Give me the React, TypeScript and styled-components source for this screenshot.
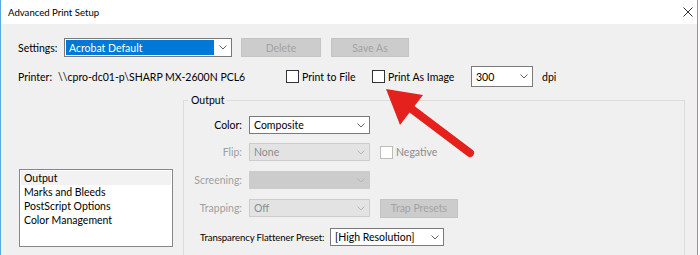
import React from 'react';
import styled, { createGlobalStyle } from 'styled-components';

const GlobalStyle = createGlobalStyle`
  html, body {
    margin: 0;
    padding: 0;
    background: #ffffff;
  }
  body {
    font-family: Lato, 'Noto Sans', sans-serif;
    font-size: 10.5px;
    color: #000;
  }
`;

const Chevron = ({ disabled }: { disabled?: boolean }) => (
  <svg width="8" height="5" viewBox="0 0 8 5">
    <polyline points="0.5,0.5 4,4 7.5,0.5" fill="none" stroke={disabled ? '#b4b4b4' : '#606060'} strokeWidth="1" />
  </svg>
);

const Combo = ({
  width,
  value,
  disabled,
  selected,
  empty,
}: {
  width: number;
  value?: string;
  disabled?: boolean;
  selected?: boolean;
  empty?: boolean;
}) => (
  <ComboBox $width={width} $disabled={disabled} $empty={empty}>
    <ComboValue $selected={selected} $disabled={disabled}>
      {value}
    </ComboValue>
    <ComboArrow>
      <Chevron disabled={disabled} />
    </ComboArrow>
  </ComboBox>
);

const Check = ({ label, disabled }: { label: string; disabled?: boolean }) => (
  <CheckItem $disabled={disabled}>
    <CheckBox $disabled={disabled} />
    {label}
  </CheckItem>
);

const App = () => {
  return (
    <>
      <GlobalStyle />
      <Window>
        <TitleBar>
          <Title>Advanced Print Setup</Title>
          <CloseIcon width="10" height="10" viewBox="0 0 10 10">
            <line x1="0.5" y1="0.5" x2="9.5" y2="9.5" stroke="#333" strokeWidth="1" />
            <line x1="9.5" y1="0.5" x2="0.5" y2="9.5" stroke="#333" strokeWidth="1" />
          </CloseIcon>
        </TitleBar>
        <Body>
          <SettingsRow>
            <Label $width={46}>Settings:</Label>
            <Combo width={168} value="Acrobat Default" selected />
            <Button $width={80} $ml={9}>Delete</Button>
            <Button $width={78} $ml={10}>Save As</Button>
          </SettingsRow>
          <PrinterRow>
            <Label $width={40}>Printer:</Label>
            <Label $width={228}>\\cpro-dc01-p\SHARP MX-2600N PCL6</Label>
            <CheckSlot $width={86}>
              <Check label="Print to File" />
            </CheckSlot>
            <CheckSlot $width={99}>
              <Check label="Print As Image" />
            </CheckSlot>
            <Combo width={62} value="300" />
            <Unit>dpi</Unit>
          </PrinterRow>
          <MainArea>
            <PanelList>
              <ListItem $active>Output</ListItem>
              <ListItem>Marks and Bleeds</ListItem>
              <ListItem>PostScript Options</ListItem>
              <ListItem>Color Management</ListItem>
            </PanelList>
            <Group>
              <Legend>Output</Legend>
              <FieldRow $mt={9}>
                <FieldLabel>Color:</FieldLabel>
                <Combo width={121} value="Composite" />
              </FieldRow>
              <FieldRow $mt={9}>
                <FieldLabel $disabled>Flip:</FieldLabel>
                <Combo width={121} value="None" disabled />
                <CheckSlot $width={80} $ml={10}>
                  <Check label="Negative" disabled />
                </CheckSlot>
              </FieldRow>
              <FieldRow $mt={10}>
                <FieldLabel $disabled>Screening:</FieldLabel>
                <Combo width={121} disabled empty />
              </FieldRow>
              <FieldRow $mt={10}>
                <FieldLabel $disabled>Trapping:</FieldLabel>
                <Combo width={121} value="Off" disabled />
                <Button $width={78} $ml={10}>Trap Presets</Button>
              </FieldRow>
              <FlattenerRow>
                <FlattenerLabel>Transparency Flattener Preset:</FlattenerLabel>
                <Combo width={114} value="[High Resolution]" />
              </FlattenerRow>
            </Group>
          </MainArea>
        </Body>
        <Arrow width="700" height="255" viewBox="0 0 700 255">
          <line x1="470" y1="153" x2="409" y2="107" stroke="#e4211c" strokeWidth="8" strokeLinecap="round" />
          <polygon points="386,89 423,95 400,125" fill="#e4211c" />
        </Arrow>
      </Window>
    </>
  );
};

export default App;

const Window = styled.div`
  position: relative;
  width: 696px;
  height: 255px;
  border-left: 1px solid #5ba7dc;
  border-right: 1px solid #5ba7dc;
  background: #f0f0f0;
  overflow: hidden;
`;

const TitleBar = styled.div`
  display: flex;
  align-items: center;
  justify-content: space-between;
  height: 24px;
  padding: 0 4px 0 7px;
  background: #ffffff;
`;

const Title = styled.span`
  font-size: 9.6px;
  color: #000;
`;

const CloseIcon = styled.svg`
  display: block;
`;

const Body = styled.div`
  padding: 14px 13px 0 17px;
`;

const SettingsRow = styled.div`
  display: flex;
  align-items: center;
  height: 19px;
`;

const PrinterRow = styled.div`
  display: flex;
  align-items: center;
  height: 21px;
  margin-top: 9px;
`;

const Label = styled.span<{ $width: number }>`
  width: ${p => p.$width}px;
  flex-shrink: 0;
  white-space: nowrap;
`;

const Unit = styled.span`
  margin-left: 9px;
`;

const ComboBox = styled.div<{ $width: number; $disabled?: boolean; $empty?: boolean }>`
  box-sizing: border-box;
  display: flex;
  align-items: stretch;
  width: ${p => p.$width}px;
  height: 100%;
  border: 1px solid ${p => (p.$disabled ? '#cccccc' : '#7a7a7a')};
  background: ${p => (p.$empty ? '#cccccc' : p.$disabled ? '#e3e3e3' : '#ffffff')};
  flex-shrink: 0;
`;

const ComboValue = styled.div<{ $selected?: boolean; $disabled?: boolean }>`
  flex: 1;
  display: flex;
  align-items: center;
  margin: 1px 0 1px 1px;
  padding-left: 3px;
  white-space: nowrap;
  overflow: hidden;
  background: ${p => (p.$selected ? '#0078d7' : 'transparent')};
  color: ${p => (p.$selected ? '#ffffff' : p.$disabled ? '#8c8c8c' : '#000')};
`;

const ComboArrow = styled.div`
  width: 17px;
  display: flex;
  align-items: center;
  justify-content: center;
`;

const Button = styled.div<{ $width: number; $ml: number }>`
  box-sizing: border-box;
  display: flex;
  align-items: center;
  justify-content: center;
  width: ${p => p.$width}px;
  height: 19px;
  margin-left: ${p => p.$ml}px;
  background: #cccccc;
  border: 1px solid #c4c4c4;
  color: #a3a3a3;
  flex-shrink: 0;
`;

const CheckSlot = styled.div<{ $width: number; $ml?: number }>`
  width: ${p => p.$width}px;
  margin-left: ${p => p.$ml || 0}px;
  flex-shrink: 0;
`;

const CheckItem = styled.label<{ $disabled?: boolean }>`
  display: flex;
  align-items: center;
  gap: 3px;
  white-space: nowrap;
  color: ${p => (p.$disabled ? '#8c8c8c' : '#000')};
`;

const CheckBox = styled.span<{ $disabled?: boolean }>`
  box-sizing: border-box;
  display: inline-block;
  width: 13px;
  height: 13px;
  background: #fff;
  border: 1px solid ${p => (p.$disabled ? '#bcbcbc' : '#333')};
`;

const MainArea = styled.div`
  display: flex;
  align-items: flex-start;
  margin-top: 6px;
`;

const PanelList = styled.div`
  box-sizing: border-box;
  width: 154px;
  height: 78px;
  margin: 76px 10px 0 1px;
  padding: 1px;
  background: #fff;
  border: 1px solid #828790;
  flex-shrink: 0;
`;

const ListItem = styled.div<{ $active?: boolean }>`
  height: 14px;
  line-height: 14px;
  padding-left: 3px;
  background: ${p => (p.$active ? '#f2f2f2' : 'transparent')};
  white-space: nowrap;
`;

const Group = styled.fieldset`
  box-sizing: border-box;
  width: 502px;
  height: 170px;
  margin: 0;
  padding: 0;
  border: 1px solid #dcdcdc;
  flex-shrink: 0;
`;

const Legend = styled.legend`
  margin-left: 4px;
  padding: 0 3px;
  line-height: 14px;
`;

const FieldRow = styled.div<{ $mt: number }>`
  display: flex;
  align-items: center;
  height: 18px;
  margin-top: ${p => p.$mt}px;
`;

const FieldLabel = styled.span<{ $disabled?: boolean }>`
  width: 58px;
  margin-right: 7px;
  text-align: right;
  white-space: nowrap;
  color: ${p => (p.$disabled ? '#a0a0a0' : '#000')};
`;

const FlattenerRow = styled.div`
  display: flex;
  align-items: center;
  height: 18px;
  margin-top: 11px;
  padding-left: 16px;
`;

const FlattenerLabel = styled.span`
  width: 130px;
  font-size: 9.6px;
  letter-spacing: -0.1px;
  white-space: nowrap;
`;

const Arrow = styled.svg`
  position: absolute;
  left: -1px;
  top: 0;
  pointer-events: none;
`;
